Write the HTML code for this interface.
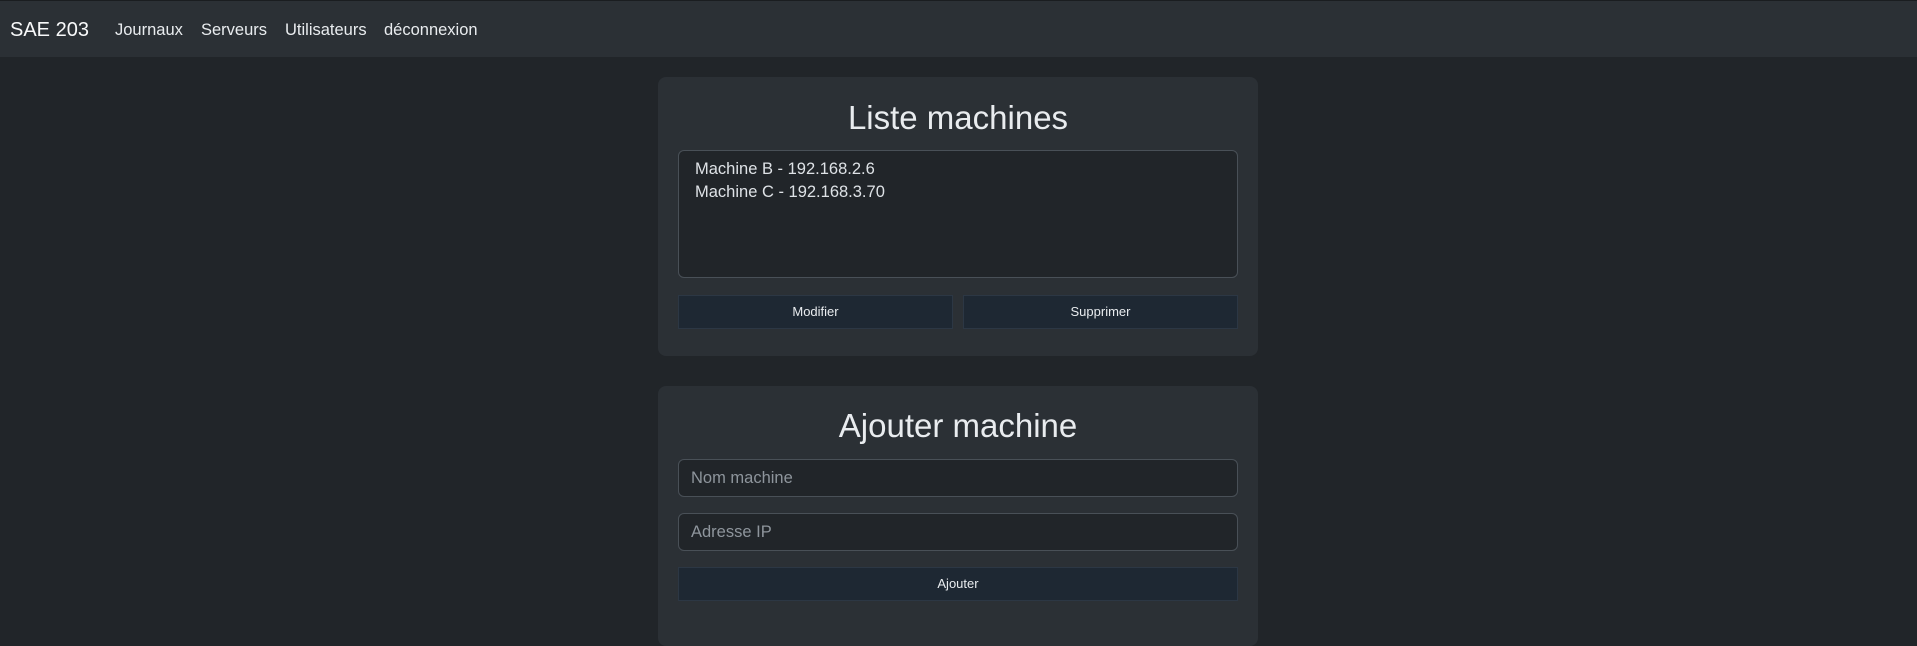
<!DOCTYPE html>
<html><head><meta charset="utf-8"><style>
*{box-sizing:border-box;margin:0;padding:0}
body{width:1917px;height:629px;overflow:hidden;background:#212529;font-family:"Liberation Sans",sans-serif;color:#dee2e6;position:relative}
.nav{position:absolute;left:0;top:0;width:1917px;height:57px;background:#2b3035;border-top:1px solid #1a1d20}
.nav span{position:absolute;top:19px;font-size:16.5px;color:#e9ecef;line-height:20px}
.nav .b{font-size:20px;top:17px;left:10px;line-height:24px;color:#f8f9fa}
.card{position:absolute;left:658px;width:600px;background:#2b3035;border-radius:8px}
.t{position:absolute;left:0;width:600px;text-align:center;font-size:33px;line-height:40px;color:#e9ecef}
.box{position:absolute;left:20px;width:560px;background:#212529;border:1px solid #495057;border-radius:6px}
.btn{position:absolute;background:#1e2833;border:1px solid #2c3744;font-size:13px;color:#e9ecef;text-align:center;line-height:32px}
.ph{position:absolute;left:12px;font-size:16.5px;color:#8e959c}
</style></head><body>
<div class="nav"><span class="b">SAE 203</span><span style="left:115px">Journaux</span><span style="left:201px">Serveurs</span><span style="left:285px">Utilisateurs</span><span style="left:384px">déconnexion</span></div>
<div class="card" style="top:77px;height:279px">
<div class="t" style="top:21px">Liste machines</div>
<div class="box" style="top:73px;height:128px">
<div style="position:absolute;left:16px;top:7px;font-size:16.5px;line-height:23px;color:#dee2e6">Machine B - 192.168.2.6<br>Machine C - 192.168.3.70</div></div>
<div class="btn" style="left:20px;top:218px;width:275px;height:34px">Modifier</div>
<div class="btn" style="left:305px;top:218px;width:275px;height:34px">Supprimer</div>
</div>
<div class="card" style="top:386px;height:260px">
<div class="t" style="top:20px">Ajouter machine</div>
<div class="box" style="top:73px;height:38px"><div class="ph" style="top:9px">Nom machine</div></div>
<div class="box" style="top:127px;height:38px"><div class="ph" style="top:9px">Adresse IP</div></div>
<div class="btn" style="left:20px;top:181px;width:560px;height:34px">Ajouter</div>
</div>
</body></html>
